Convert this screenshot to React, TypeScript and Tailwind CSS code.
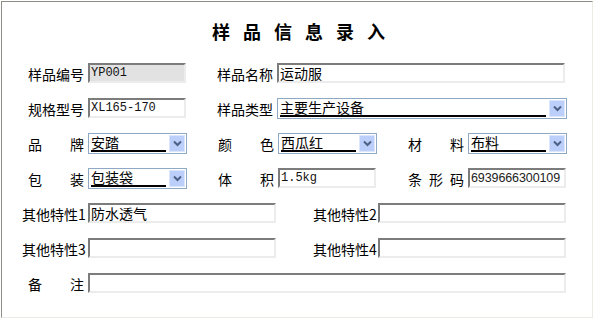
const cjk = { fontFamily: '"Noto Sans CJK SC", "Liberation Sans", sans-serif' };

function Label({
  chars,
  width = 56,
  className = "",
}: {
  chars: string[];
  width?: number;
  className?: string;
}) {
  return (
    <div
      style={{ width }}
      className={`flex h-[21px] shrink-0 items-center justify-between text-[14px] leading-none text-black ${className}`}
    >
      {chars.map((c, i) => (
        <span key={i}>{c}</span>
      ))}
    </div>
  );
}

function TextBox({
  value = "",
  width,
  disabled = false,
  mono = false,
  sans = false,
}: {
  value?: string;
  width: number;
  disabled?: boolean;
  mono?: boolean;
  sans?: boolean;
}) {
  return (
    <div
      style={{ width }}
      className={`flex h-[20px] shrink-0 items-center overflow-hidden border-2 border-t-[#7c7c7c] border-l-[#7c7c7c] border-r-[#ececec] border-b-[#ececec] pl-[1px] ${
        disabled ? "bg-[#e2e2e2]" : "bg-white"
      }`}
    >
      <span
        className={
          mono
            ? "font-['Liberation_Mono',monospace] text-[12px] leading-none text-[#111]"
            : sans
              ? "font-['Liberation_Sans',sans-serif] text-[12.5px] leading-none tracking-[-0.1px] text-[#222]"
              : "text-[14px] leading-none text-black"
        }
      >
        {value}
      </span>
    </div>
  );
}

function Select({ value, width }: { value: string; width: number }) {
  return (
    <div
      style={{ width }}
      className="flex h-[21px] shrink-0 items-center border border-[#8fa8c4] bg-white pl-[2px] pr-[1px]"
    >
      <div className="flex h-[17px] min-w-0 flex-1 items-start">
        <span className="w-full border-b-2 border-black pb-[1px] text-[14px] leading-[14px] text-black">
          {value}
        </span>
      </div>
      <div className="ml-[3px] flex h-[17px] w-[16px] items-center justify-center border border-[#dbe5fc] bg-[#bccffa]">
        <svg width="9" height="7" viewBox="0 0 9 7">
          <path d="M1 1.5 L4.5 5 L8 1.5" fill="none" stroke="#4d6185" strokeWidth="2" />
        </svg>
      </div>
    </div>
  );
}

export default function App() {
  return (
    <div className="h-[320px] w-[595px] bg-white p-px" style={cjk}>
      <div className="h-[317px] w-[592px] border-t border-l border-r border-b border-t-[#8e8e86] border-l-[#8e8e86] border-r-[#ecece6] border-b-[#ecece6] bg-white">
        <div className="flex h-[61px] justify-center pt-[20px]">
          <h1 className="pl-[16px] text-[18px] font-bold leading-none tracking-[13px] text-black">
            样品信息录入
          </h1>
        </div>

        <div className="flex flex-col">
          <div className="flex h-[35px] items-start pl-[26px]">
            <Label chars={["样", "品", "编", "号"]} />
            <div className="ml-[4px]">
              <TextBox value="YP001" width={98} disabled mono />
            </div>
            <Label chars={["样", "品", "名", "称"]} className="ml-[31px]" />
            <div className="ml-[4px]">
              <TextBox value="运动服" width={288} />
            </div>
          </div>

          <div className="flex h-[35px] items-start pl-[26px]">
            <Label chars={["规", "格", "型", "号"]} />
            <div className="ml-[4px]">
              <TextBox value="XL165-170" width={98} mono />
            </div>
            <Label chars={["样", "品", "类", "型"]} className="ml-[31px]" />
            <div className="ml-[4px]">
              <Select value="主要生产设备" width={290} />
            </div>
          </div>

          <div className="flex h-[35px] items-start pl-[26px]">
            <Label chars={["品", "牌"]} />
            <div className="ml-[4px]">
              <Select value="安踏" width={99} />
            </div>
            <Label chars={["颜", "色"]} className="ml-[31px]" />
            <div className="ml-[4px]">
              <Select value="西瓜红" width={99} />
            </div>
            <Label chars={["材", "料"]} className="ml-[31px]" />
            <div className="ml-[4px]">
              <Select value="布料" width={99} />
            </div>
          </div>

          <div className="flex h-[35px] items-start pl-[26px]">
            <Label chars={["包", "装"]} />
            <div className="ml-[4px]">
              <Select value="包装袋" width={99} />
            </div>
            <Label chars={["体", "积"]} className="ml-[31px]" />
            <div className="ml-[4px]">
              <TextBox value="1.5kg" width={98} mono />
            </div>
            <Label chars={["条", "形", "码"]} className="ml-[32px]" />
            <div className="ml-[4px]">
              <TextBox value="6939666300109" width={98} sans />
            </div>
          </div>

          <div className="flex h-[35px] items-start pl-[19px]">
            <Label chars={["其他特性1"]} width={66} className="justify-center" />
            <div className="ml-px">
              <TextBox value="防水透气" width={188} />
            </div>
            <Label chars={["其他特性2"]} width={66} className="ml-[36px] justify-center" />
            <TextBox width={188} />
          </div>

          <div className="flex h-[35px] items-start pl-[19px]">
            <Label chars={["其他特性3"]} width={66} className="justify-center" />
            <div className="ml-px">
              <TextBox width={188} />
            </div>
            <Label chars={["其他特性4"]} width={66} className="ml-[36px] justify-center" />
            <TextBox width={188} />
          </div>

          <div className="flex h-[35px] items-start pl-[26px]">
            <Label chars={["备", "注"]} />
            <div className="ml-[4px]">
              <TextBox width={478} />
            </div>
          </div>
        </div>
      </div>
    </div>
  );
}
